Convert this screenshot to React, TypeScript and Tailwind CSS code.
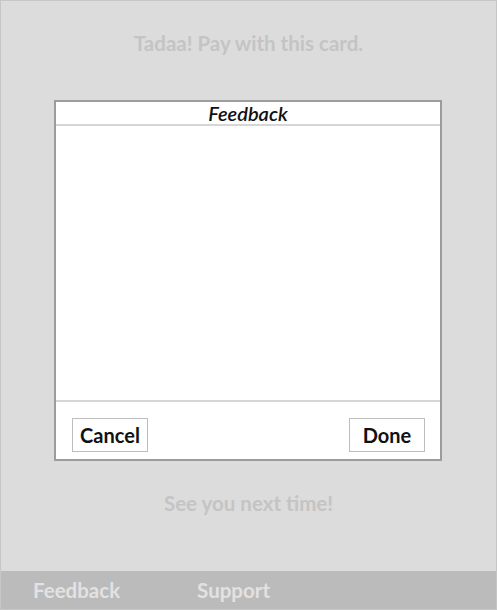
export default function App() {
  return (
    <div className="h-[610px] w-full border border-[#c6c6c6] bg-[#dcdcdc] flex flex-col font-['Lato',sans-serif]">
      {/* top message */}
      <div className="pt-[30px] text-center text-[20.5px] leading-6 font-bold text-[#c4c4c4]">
        Tadaa! Pay with this card.
      </div>

      {/* feedback modal */}
      <div className="mt-[45px] ml-[53px] w-[388px] h-[361px] bg-white border-2 border-[#9c9c9c] flex flex-col">
        <div className="h-[24px] border-b-2 border-[#d6d6d6] text-center text-[20px] leading-[22px] italic font-semibold text-[#111]">
          Feedback
        </div>
        <div className="flex-1" />
        <div className="h-[59px] border-t-2 border-[#d6d6d6] flex items-end justify-between pl-[16px] pr-[15px] pb-[7px]">
          <button className="w-[76px] h-[34px] border border-[#bdbdbd] text-[20px] font-bold text-[#111]">
            Cancel
          </button>
          <button className="w-[76px] h-[34px] border border-[#bdbdbd] text-[20px] font-bold text-[#111]">
            Done
          </button>
        </div>
      </div>

      <div className="mt-[30px] text-center text-[20.5px] leading-6 font-bold text-[#c4c4c4]">
        See you next time!
      </div>

      <div className="mt-auto h-[38px] bg-[#bbbbbb] flex items-center text-[20.5px] font-bold text-[#e2e2e2]">
        <span className="ml-[32px]">Feedback</span>
        <span className="ml-[77px]">Support</span>
      </div>
    </div>
  );
}
